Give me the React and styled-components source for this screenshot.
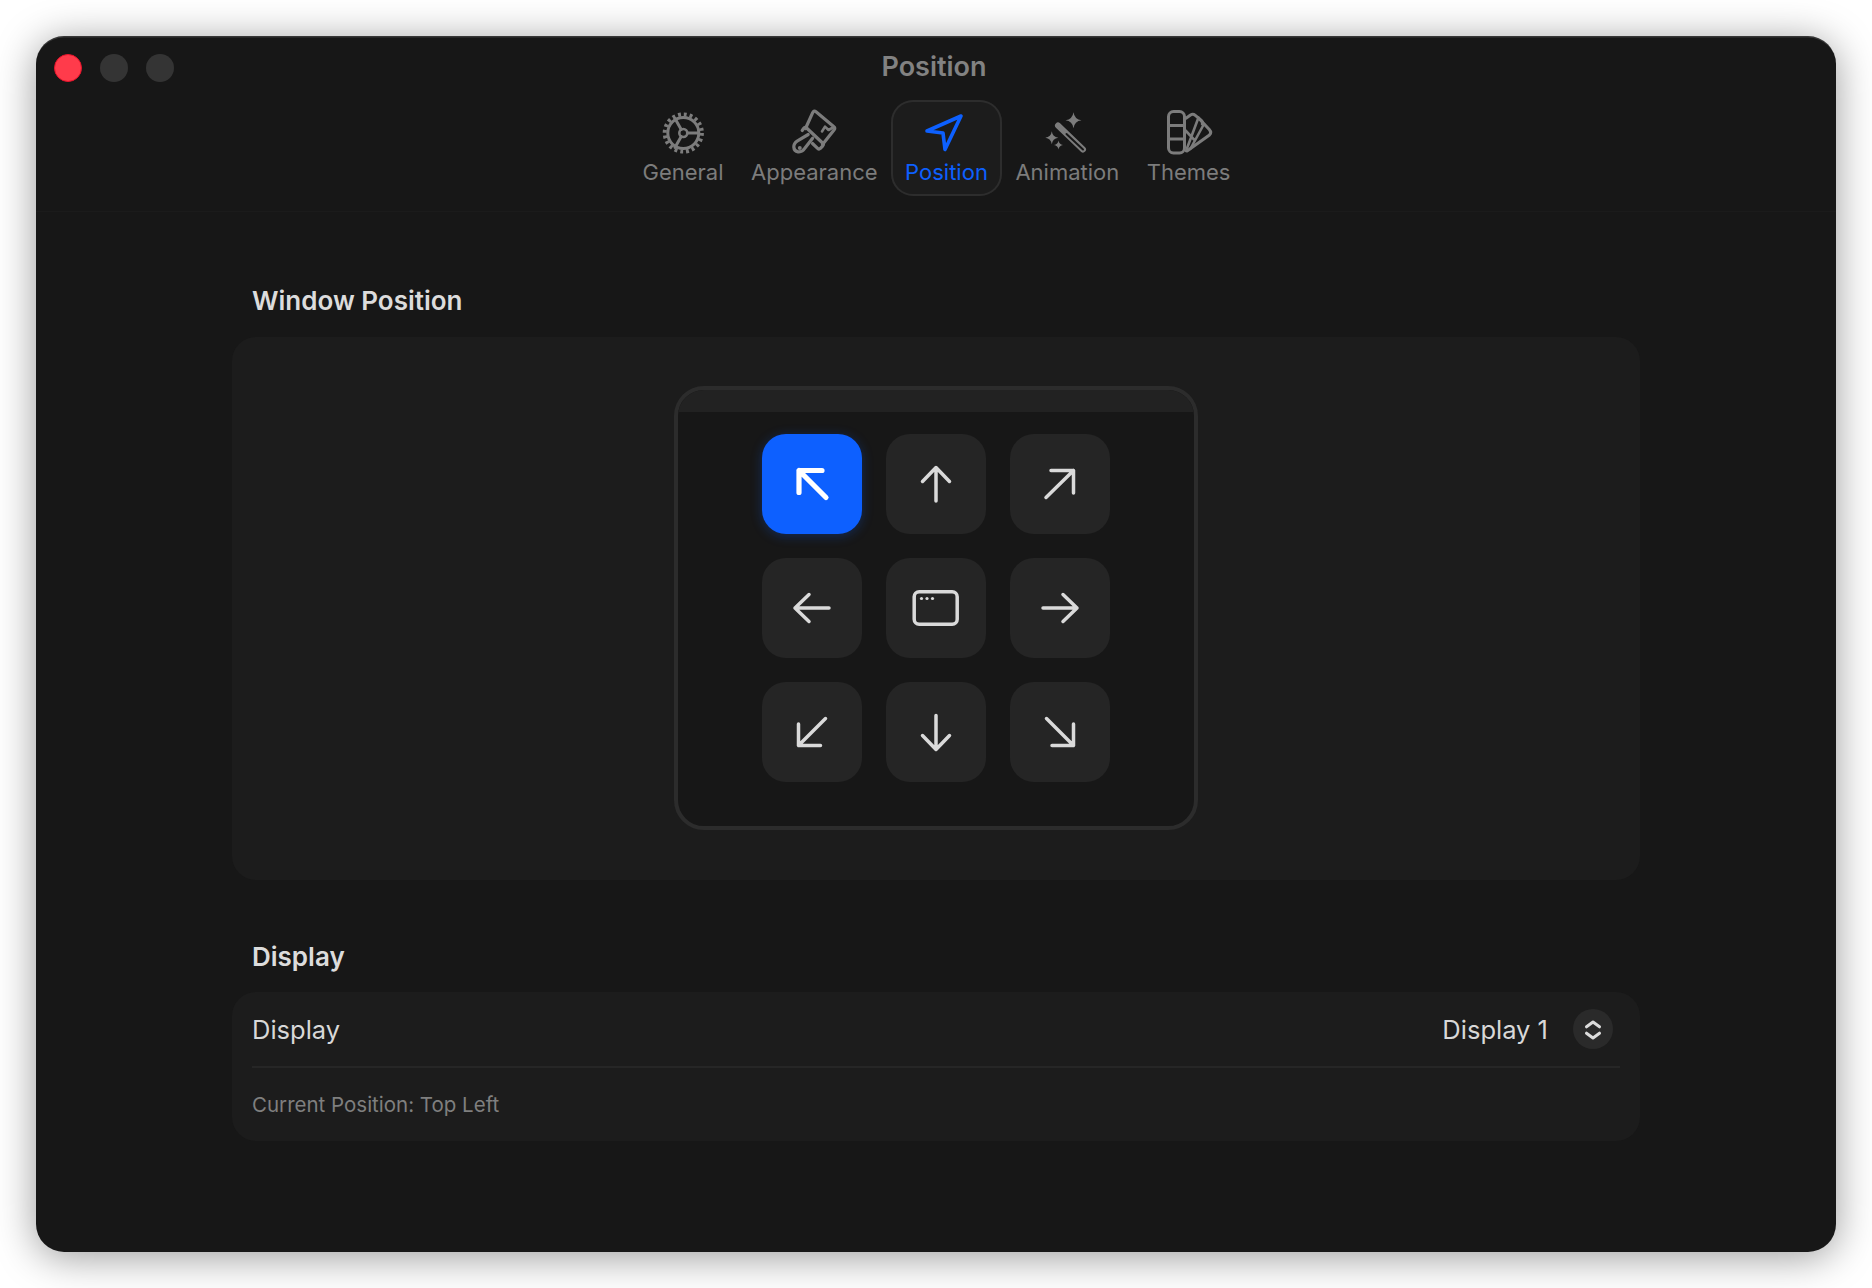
import React from "react";
import styled, { createGlobalStyle } from "styled-components";

const Global = createGlobalStyle`
  html, body { margin: 0; padding: 0; background: #fff; }
  * { box-sizing: border-box; }
  body { font-family: Inter, "Liberation Sans", sans-serif; }
`;

const Page = styled.div`
  width: 1872px;
  height: 1288px;
  padding: 36px;
  background: #fff;
`;
const Win = styled.div`
  width: 1800px;
  height: 1216px;
  border-radius: 28px;
  background: #171717;
  box-shadow: inset 0 2px 0 -0.5px rgba(255, 255, 255, 0.14), 0 5px 40px rgba(0, 0, 0, 0.4);
  display: flex;
  flex-direction: column;
`;
const Header = styled.header`
  height: 176px;
  border-bottom: 1px solid #1b1b1b;
  display: flex;
  flex-direction: column;
`;
const TitleRow = styled.div`
  height: 64px;
  display: grid;
  grid-template-columns: 1fr auto 1fr;
  align-items: flex-start;
`;
const Lights = styled.div`
  display: flex;
  gap: 18px;
  padding: 18px 0 0 18px;
`;
const Light = styled.span`
  width: 28px;
  height: 28px;
  border-radius: 50%;
  background: ${(p) => (p.$red ? "#ff3b4b" : "#343434")};
  border: ${(p) => (p.$red ? "1px solid #e8132b" : "none")};
`;
const Title = styled.div`
  font-size: 27px;
  font-weight: 600;
  line-height: 32px;
  padding-top: 15px;
  margin-left: -4px;
  color: #828282;
`;
const Tabs = styled.nav`
  display: flex;
  justify-content: center;
  gap: 0;
  padding-left: 1px;
`;
const Tab = styled.div`
  height: 96px;
  padding: 5px 13.75px 0;
  border-radius: 22px;
  display: flex;
  flex-direction: column;
  align-items: center;
  background: ${(p) => (p.$active ? "#1c1c1c" : "transparent")};
  box-shadow: ${(p) => (p.$active ? "inset 0 0 0 2px #2d2d2d" : "none")};
  color: ${(p) => (p.$active ? "#0d60ff" : "#7c7c7c")};
  svg { flex: none; }
`;
const TabLabel = styled.span`
  font-size: 22px;
  line-height: 26px;
  white-space: nowrap;
  margin-top: -2px;
`;
const Body = styled.main`
  padding: 71px 196px 0;
`;
const Heading = styled.h2`
  margin: ${(p) => (p.$second ? "59px" : "0")} 0 ${(p) => (p.$second ? "17px" : "18px")} 20px;
  font-size: 26px;
  line-height: 36px;
  font-weight: 600;
  color: #dcdcdc;
`;
const Card = styled.section`
  background: #1c1c1c;
  border-radius: 24px;
`;
const PositionCard = styled(Card)`
  height: 543px;
  display: flex;
  justify-content: center;
  padding-top: 49px;
`;
const Frame = styled.div`
  width: 524px;
  height: 444px;
  border: 4px solid #2c2c2c;
  border-radius: 30px;
  background: #171717;
  overflow: hidden;
`;
const FrameBar = styled.div`
  height: 22px;
  background: #222;
`;
const Grid = styled.div`
  display: grid;
  grid-template-columns: repeat(3, 100px);
  grid-auto-rows: 100px;
  gap: 24px;
  justify-content: center;
  margin-top: 22px;
`;
const PosButton = styled.button`
  border: 0;
  padding: 0;
  border-radius: 24px;
  background: ${(p) => (p.$active ? "#0d60ff" : "#252525")};
  box-shadow: ${(p) => (p.$active ? "0 2px 12px rgba(13, 96, 255, 0.28)" : "none")};
  color: ${(p) => (p.$active ? "#fff" : "#dadada")};
  display: flex;
  align-items: center;
  justify-content: center;
`;
const DisplayCard = styled(Card)`
  height: 149px;
  padding: 0 20px;
  display: flex;
  flex-direction: column;
`;
const Row = styled.div`
  height: 76px;
  flex: none;
  border-bottom: 2px solid #262626;
  display: flex;
  align-items: center;
  justify-content: space-between;
  padding-right: 7px;
`;
const RowLabel = styled.span`
  font-size: 25.5px;
  color: #d8d8d8;
`;
const Select = styled.div`
  display: flex;
  align-items: center;
  gap: 25px;
`;
const Stepper = styled.span`
  width: 40px;
  height: 40px;
  border-radius: 50%;
  background: #2a2a2a;
  display: flex;
  align-items: center;
  justify-content: center;
`;
const Caption = styled.div`
  flex: 1;
  display: flex;
  align-items: center;
  font-size: 20.5px;
  color: #7f7f7f;
`;

const Arrow = ({ d, w = 3.5 }) => (
  <svg width="100" height="100" viewBox="0 0 100 100" fill="none" stroke="currentColor" strokeWidth={w} strokeLinecap="round" strokeLinejoin="round">
    <path d={d} />
  </svg>
);
const WindowIcon = () => (
  <svg width="100" height="100" viewBox="0 0 100 100" fill="none" stroke="currentColor" strokeWidth="3.5">
    <rect x="28.2" y="33.7" width="43" height="32.5" rx="5" />
    <circle cx="35.5" cy="40.5" r="1.6" fill="currentColor" stroke="none" />
    <circle cx="41" cy="40.5" r="1.6" fill="currentColor" stroke="none" />
    <circle cx="46.5" cy="40.5" r="1.6" fill="currentColor" stroke="none" />
  </svg>
);

const IconSvg = ({ children }) => (
  <svg width="64" height="56" viewBox="0 0 64 56" fill="none" stroke="currentColor" strokeWidth="3" strokeLinecap="round" strokeLinejoin="round">
    {children}
  </svg>
);
const GearIcon = () => (
  <IconSvg>
    <circle cx="32.3" cy="28" r="15.5" />
    <circle cx="32.3" cy="28" r="18.6" strokeWidth="4" strokeLinecap="butt" strokeDasharray="2.9 2.94" />
    <circle cx="32.3" cy="28" r="4" strokeWidth="2.6" />
    <path d="M36.5 28H47M30.2 24.4L24 13.5M30.2 31.6L24 42.5" />
  </IconSvg>
);
const BrushIcon = () => (
  <IconSvg>
    <g transform="translate(2 0)">
      <path d="M21.5 23.5L28.8 7.4Q30 5.2 32 6.8L49.6 21.4Q51.6 23 50 25L38.5 39.5" strokeWidth="3.2" />
      <path d="M38 26.5L41 21.6L44.5 25L49 22.5" strokeWidth="2.6" />
      <path d="M18.2 25.5L20 23Q21.2 21.6 22.6 23L38.6 38Q40 39.4 38.8 40.8L36.4 43.4Q35 44.6 33.6 43.3L28.5 38.5" strokeWidth="3.2" />
      <path d="M24.2 29.5L13.5 35.8C8.2 39 8.8 46 14 46.8C17 47.2 19.4 45.6 21 43L28.6 33.2" strokeWidth="3.2" />
      <circle cx="15.8" cy="43" r="2" fill="currentColor" stroke="none" />
    </g>
  </IconSvg>
);
const NavIcon = () => (
  <IconSvg>
    <path d="M13 26L47 11L31 44.5L29 28Z" strokeWidth="3.6" />
  </IconSvg>
);
const Star = ({ x, y, r }) => (
  <path
    d={`M${x} ${y - r}Q${x + r * 0.12} ${y - r * 0.12} ${x + r} ${y}Q${x + r * 0.12} ${y + r * 0.12} ${x} ${y + r}Q${x - r * 0.12} ${y + r * 0.12} ${x - r} ${y}Q${x - r * 0.12} ${y - r * 0.12} ${x} ${y - r}Z`}
    fill="currentColor"
    stroke="none"
  />
);
const WandIcon = () => (
  <IconSvg>
    <g transform="translate(-1.5 0)">
      <path d="M24.5 20.5L49.5 44.5" strokeWidth="6" />
      <path d="M33 29L49.5 44.5" strokeWidth="2" stroke="#171717" />
      <Star x={40} y={15.3} r={8} />
      <Star x={18.3} y={32.7} r={6.5} />
      <Star x={25} y={40} r={4.5} />
    </g>
  </IconSvg>
);
const ThemesIcon = () => (
  <IconSvg>
    <g transform="translate(2.5 0)">
      <rect x="9" y="6.5" width="16" height="41.5" rx="5" />
      <path d="M9 20.5H25M9 34H25" />
      <path d="M26.5 13.2L31 10Q33.5 8.5 35.8 10.4L41.5 15.2Q43.5 17 42.8 19" />
      <path d="M39.5 13.5L49.8 24.5Q52.5 27.6 50 30L27.5 46" />
      <path d="M39 12.5L26.5 46M26 25.5L34.5 34.5M44.5 19L30.8 44" strokeWidth="2.6" />
    </g>
  </IconSvg>
);

const tabs = [
  { label: "General", Icon: GearIcon },
  { label: "Appearance", Icon: BrushIcon },
  { label: "Position", Icon: NavIcon, active: true },
  { label: "Animation", Icon: WandIcon },
  { label: "Themes", Icon: ThemesIcon },
];

const arrows = [
  { d: "M64 63.5L37 36.5M37 58.5V36.5H60", w: 5.2, active: true },
  { d: "M50 67V34M36.5 47.5L50 33.5L63.5 47.5" },
  { d: "M36 63.5L63.5 36.5M41 36.5H63.5V59" },
  { d: "M67 50H33M47 36.5L33 50L47 63.5" },
  { center: true },
  { d: "M33 50H67M53 36.5L67 50L53 63.5" },
  { d: "M63.5 36.5L36.5 63.5M36.5 42V63.5H58.5" },
  { d: "M50 33.5V67M36.5 53.5L50 67.5L63.5 53.5" },
  { d: "M36.5 36.5L63.5 63.5M63.5 42V63.5H42" },
];

export default function App() {
  return (
    <Page>
      <Global />
      <Win>
        <Header>
          <TitleRow>
            <Lights>
              <Light $red />
              <Light />
              <Light />
            </Lights>
            <Title>Position</Title>
            <div />
          </TitleRow>
          <Tabs>
            {tabs.map(({ label, Icon, active }) => (
              <Tab key={label} $active={active}>
                <Icon />
                <TabLabel>{label}</TabLabel>
              </Tab>
            ))}
          </Tabs>
        </Header>
        <Body>
          <Heading>Window Position</Heading>
          <PositionCard>
            <Frame>
              <FrameBar />
              <Grid>
                {arrows.map((a, i) => (
                  <PosButton key={i} $active={a.active}>
                    {a.center ? <WindowIcon /> : <Arrow d={a.d} w={a.w} />}
                  </PosButton>
                ))}
              </Grid>
            </Frame>
          </PositionCard>
          <Heading $second>Display</Heading>
          <DisplayCard>
            <Row>
              <RowLabel>Display</RowLabel>
              <Select>
                <RowLabel>Display 1</RowLabel>
                <Stepper>
                  <svg width="40" height="40" viewBox="0 0 40 40" fill="none" stroke="#dcdcdc" strokeWidth="3" strokeLinecap="round" strokeLinejoin="round">
                    <path d="M13.5 17.8L20 13L26.5 17.8M13.5 24.2L20 29L26.5 24.2" />
                  </svg>
                </Stepper>
              </Select>
            </Row>
            <Caption>Current Position: Top Left</Caption>
          </DisplayCard>
        </Body>
      </Win>
    </Page>
  );
}
